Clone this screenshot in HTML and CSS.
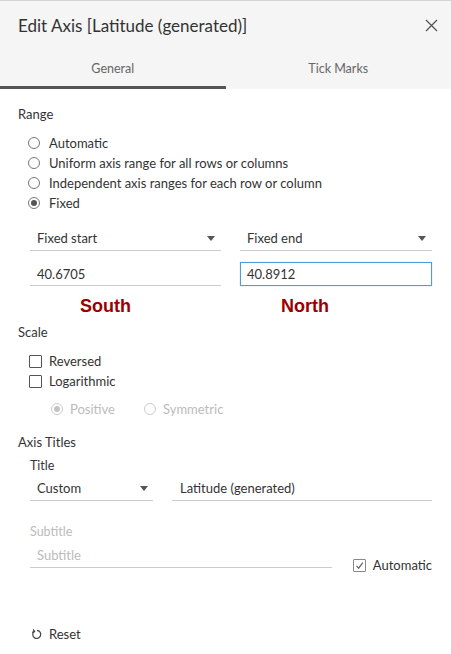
FILE: index.html
```html
<!DOCTYPE html>
<html>
<head>
<meta charset="utf-8">
<link rel="stylesheet" href="styles.css">
</head>
<body>
<div class="dialog">
  <div class="header">
    <div class="title-row">
      <span class="title">Edit Axis [Latitude (generated)]</span>
      <svg class="close" width="13" height="13" viewBox="0 0 13 13"><path d="M1 1L12 12M12 1L1 12" stroke="#555" stroke-width="1.3" fill="none"/></svg>
    </div>
    <div class="tabs">
      <div class="tab active">General</div>
      <div class="tab">Tick Marks</div>
    </div>
  </div>

  <div class="content">
    <div class="section-title range-title">Range</div>
    <div class="options">
      <div class="opt"><span class="radio"></span>Automatic</div>
      <div class="opt"><span class="radio"></span>Uniform axis range for all rows or columns</div>
      <div class="opt"><span class="radio"></span>Independent axis ranges for each row or column</div>
      <div class="opt"><span class="radio checked"></span>Fixed</div>
    </div>

    <div class="pair dropdowns">
      <div class="select"><span>Fixed start</span><span class="caret"></span></div>
      <div class="select"><span>Fixed end</span><span class="caret"></span></div>
    </div>
    <div class="pair inputs">
      <div class="field">40.6705</div>
      <div class="field focused">40.8912</div>
    </div>
    <div class="pair notes">
      <div class="note south">South</div>
      <div class="note north">North</div>
    </div>

    <div class="section-title scale-title">Scale</div>
    <div class="checks">
      <div class="opt"><span class="checkbox"></span>Reversed</div>
      <div class="opt"><span class="checkbox"></span>Logarithmic</div>
    </div>
    <div class="sub-options">
      <div class="opt disabled"><span class="radio checked"></span>Positive</div>
      <div class="opt disabled"><span class="radio"></span>Symmetric</div>
    </div>

    <div class="section-title axis-title">Axis Titles</div>
    <div class="label title-label">Title</div>
    <div class="title-fields">
      <div class="select custom"><span>Custom</span><span class="caret"></span></div>
      <div class="field grow">Latitude (generated)</div>
    </div>
    <div class="label disabled-label subtitle-label">Subtitle</div>
    <div class="subtitle-row">
      <div class="field placeholder">Subtitle</div>
      <div class="opt auto"><span class="checkbox checked-box"><svg width="11" height="11" viewBox="0 0 11 11"><path d="M2.5 5.8L4.6 8.2L8.8 2.6" stroke="#666" stroke-width="1.2" fill="none"/></svg></span>Automatic</div>
    </div>

    <div class="reset">
      <svg width="11" height="12" viewBox="0 0 11 12"><path d="M3.2 3.3A4 4 0 1 0 6 2.4" stroke="#444" stroke-width="1.2" fill="none"/><path d="M2.2 1.4L3.6 3.6L1.2 4.4" stroke="#444" stroke-width="1.2" fill="none"/></svg>
      <span>Reset</span>
    </div>
  </div>
</div>
</body>
</html>
```

FILE: styles.css
```css
* { box-sizing: border-box; }
html, body { margin: 0; padding: 0; background: #fff; }
body {
  font-family: Lato, "Open Sans", "Liberation Sans", sans-serif;
  color: #333;
  width: 451px;
}
.header {
  background: #f5f5f5;
  border-top: 1px solid #d4d4d4;
}
.title-row {
  height: 48px;
  display: flex;
  align-items: center;
  justify-content: space-between;
  padding: 0 13px 0 18px;
}
.title {
  font-size: 17px;
  color: #333;
}
.close { display: block; }
.tabs {
  display: flex;
  height: 40px;
}
.tab {
  flex: 1;
  display: flex;
  align-items: center;
  justify-content: center;
  font-size: 12.5px;
  color: #666;
  border-bottom: 3px solid transparent;
  padding-top: 1px;
}
.tab.active {
  border-bottom-color: #555;
}
.content {
  padding: 0 19px 0 18px;
}
.section-title {
  font-size: 13px;
  line-height: 20px;
  height: 20px;
}
.range-title { margin-top: 15px; }
.options {
  margin-top: 9px;
  padding-left: 10px;
}
.opt {
  display: flex;
  align-items: center;
  height: 20px;
  font-size: 13px;
  color: #333;
}
.radio {
  width: 12px;
  height: 12px;
  border: 1px solid #777;
  border-radius: 50%;
  margin-right: 9px;
  display: flex;
  align-items: center;
  justify-content: center;
  flex: none;
}
.radio.checked::after {
  content: "";
  width: 6px;
  height: 6px;
  border-radius: 50%;
  background: #555;
}
.pair {
  display: grid;
  grid-template-columns: 191px 192px;
  column-gap: 19px;
  padding-left: 12px;
}
.dropdowns { margin-top: 13px; }
.select {
  height: 25px;
  border-bottom: 1px solid #ccc;
  display: flex;
  align-items: center;
  justify-content: space-between;
  padding: 0 6px 0 7px;
  font-size: 13px;
}
.caret {
  width: 0;
  height: 0;
  border-left: 4px solid transparent;
  border-right: 4px solid transparent;
  border-top: 5px solid #555;
}
.inputs { margin-top: 11px; }
.field {
  height: 24px;
  border-bottom: 1px solid #ccc;
  display: flex;
  align-items: center;
  padding-left: 7px;
  font-size: 13px;
  color: #333;
}
.field.focused {
  border: 1px solid #4a9fdb;
  padding-left: 6px;
  box-shadow: 0 0 1px rgba(74,159,219,0.5);
}
.notes {
  height: 33px;
  padding-top: 9px;
  align-items: start;
}
.note {
  font-size: 18px;
  line-height: 22px;
  font-weight: bold;
  color: #990000;
  font-family: "Liberation Sans", Arial, sans-serif;
}
.south { margin-left: 50px; }
.north { margin-left: 41px; }
.scale-title { margin-top: 3px; }
.checks {
  margin-top: 9px;
  padding-left: 11px;
}
.checkbox {
  width: 13px;
  height: 13px;
  border: 1px solid #555;
  border-radius: 1px;
  margin-right: 7px;
  flex: none;
  display: flex;
  align-items: center;
  justify-content: center;
}
.checked-box { border-color: #888; }
.sub-options {
  display: flex;
  margin-top: 8px;
  padding-left: 33px;
}
.opt.disabled { color: #bbb; }
.opt.disabled .radio { border-color: #ccc; margin-right: 7px; }
.opt.disabled .radio.checked::after { background: #c4c4c4; }
.sub-options .opt:first-child { width: 93px; }
.axis-title { margin-top: 13px; }
.label {
  font-size: 12.5px;
  line-height: 20px;
  height: 20px;
  padding-left: 12px;
  margin-top: 3px;
}
.title-label { margin-top: 4px; }
.disabled-label { color: #bbb; }
.title-fields {
  display: flex;
  gap: 19px;
  padding-left: 12px;
  margin-top: 0;
}
.select.custom { width: 123px; padding-right: 5px; }
.field.grow { flex: 1; height: 25px; padding-left: 8px; }
.subtitle-label { margin-top: 21px; }
.subtitle-row {
  display: flex;
  align-items: flex-end;
  padding-left: 12px;
  margin-top: 1px;
}
.field.placeholder {
  width: 303px;
  color: #bbb;
  height: 25px;
}
.opt.auto {
  margin-left: 21px;
  height: 20px;
  margin-bottom: -7px;
}
.reset {
  display: flex;
  align-items: center;
  margin-top: 56px;
  padding-left: 13px;
  font-size: 13px;
  height: 20px;
}
.reset svg { margin-right: 7px; display: block; }
```
